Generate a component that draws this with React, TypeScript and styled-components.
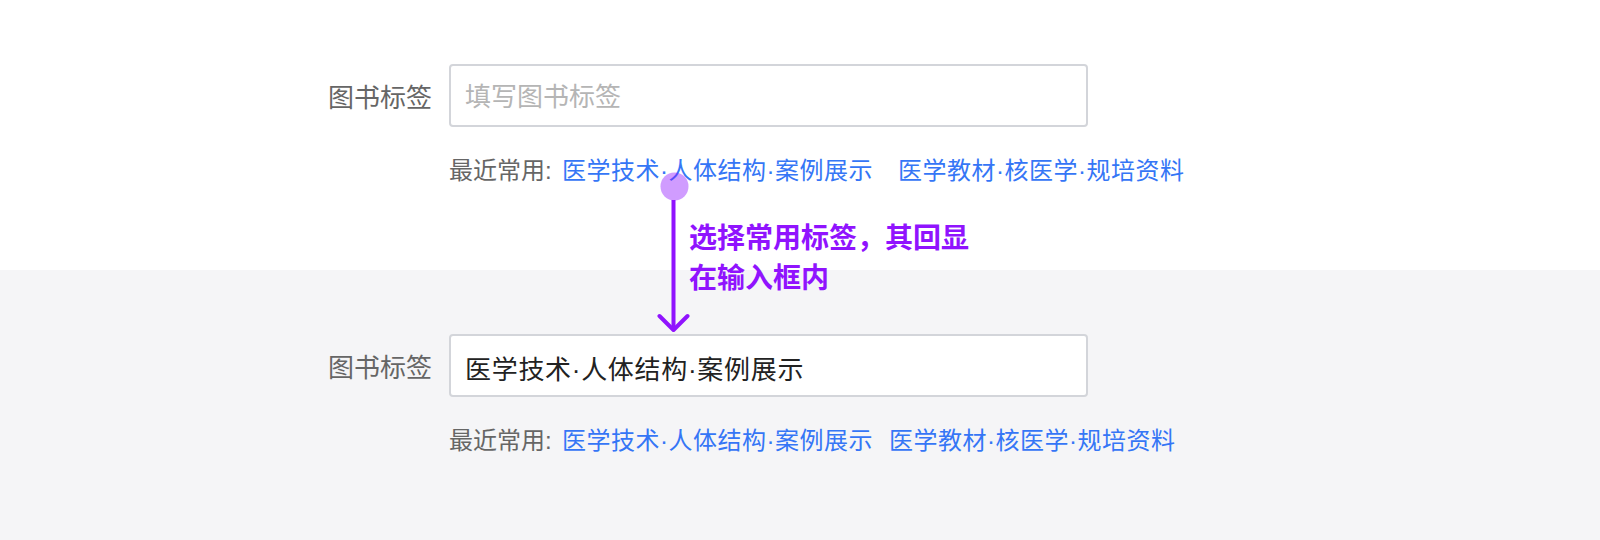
import React from "react";
import styled, { createGlobalStyle } from "styled-components";

const GlobalStyle = createGlobalStyle`
  body {
    margin: 0;
    background: #fff;
    font-family: "Noto Sans CJK SC", "Noto Sans", sans-serif;
  }
`;

// latin glyphs (the middle dot, the colon) come from Liberation Sans,
// hanzi fall through to Noto Sans CJK
const mixedFont = `"Liberation Sans", "Noto Sans CJK SC", sans-serif`;

const Page = styled.div`
  position: relative;
  width: 1600px;
  height: 540px;
  overflow: hidden;
`;

const Section = styled.section<{ $grey?: boolean }>`
  height: 270px;
  box-sizing: border-box;
  padding: 64px 0 0 328px;
  background: ${(p) => (p.$grey ? "#f5f5f7" : "#fff")};
`;

const Form = styled.div`
  display: grid;
  grid-template-columns: 104px 639px;
  column-gap: 17px;
  row-gap: 28px;
  align-items: center;
`;

const Label = styled.label`
  font-size: 26px;
  line-height: 36px;
  color: #666;
  text-align: right;
  white-space: nowrap;
`;

const Input = styled.input`
  box-sizing: border-box;
  width: 100%;
  height: 63px;
  padding: 3px 14px 0;
  border: 2px solid #d3d5da;
  border-radius: 4px;
  background: #fff;
  font-family: ${mixedFont};
  font-size: 26px;
  letter-spacing: 0.7px;
  color: #222;
  outline: none;

  &::placeholder {
    color: #b5b5b5;
    letter-spacing: 0;
  }
`;

const Recent = styled.div`
  grid-column: 2;
  display: flex;
  align-items: center;
  font-family: ${mixedFont};
  font-size: 24px;
  line-height: 32px;
  white-space: nowrap;
`;

const RecentTitle = styled.span`
  width: 113px;
  flex-shrink: 0;
  color: #666;
`;

const Links = styled.div<{ $gap: number }>`
  display: flex;
  gap: ${(p) => p.$gap}px;
  letter-spacing: 0.5px;
`;

const TagLink = styled.a`
  color: #3576f6;
  text-decoration: none;
  cursor: pointer;
`;

const Note = styled.div`
  position: absolute;
  left: 640px;
  top: 160px;
  display: flex;
  align-items: flex-start;
  pointer-events: none;
`;

const NoteText = styled.p`
  margin: 56px 0 0 -1px;
  font-size: 28px;
  line-height: 40px;
  font-weight: 700;
  color: #9013fe;
`;

const recent = ["医学技术·人体结构·案例展示", "医学教材·核医学·规培资料"];

function TagField({ value, gap }: { value?: string; gap: number }) {
  return (
    <Form>
      <Label>图书标签</Label>
      <Input readOnly placeholder="填写图书标签" value={value ?? ""} />
      <Recent>
        <RecentTitle>最近常用:</RecentTitle>
        <Links $gap={gap}>
          {recent.map((t) => (
            <TagLink key={t}>{t}</TagLink>
          ))}
        </Links>
      </Recent>
    </Form>
  );
}

export default function App() {
  return (
    <>
      <GlobalStyle />
      <Page>
        <Section>
          <TagField gap={25} />
        </Section>
        <Section $grey>
          <TagField gap={16} value="医学技术·人体结构·案例展示" />
        </Section>
        <Note>
          <svg width="50" height="176" viewBox="0 0 50 176">
            <circle cx="34.5" cy="26.5" r="14" fill="#9013fe" fillOpacity="0.42" />
            <line x1="33.5" y1="40" x2="33.5" y2="169" stroke="#9013fe" strokeWidth="4" />
            <polyline
              points="19.5,156 33.5,170 47.5,156"
              fill="none"
              stroke="#9013fe"
              strokeWidth="4"
              strokeLinejoin="round"
              strokeLinecap="round"
            />
          </svg>
          <NoteText>
            选择常用标签，其回显
            <br />
            在输入框内
          </NoteText>
        </Note>
      </Page>
    </>
  );
}
